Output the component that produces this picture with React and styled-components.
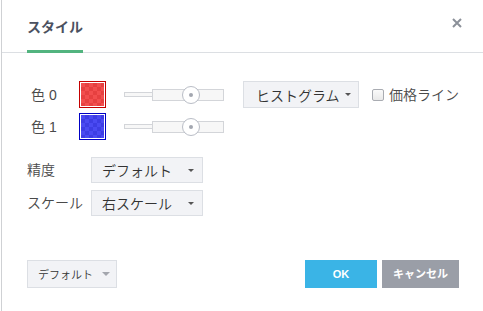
import styled, { createGlobalStyle } from 'styled-components';

const GlobalStyle = createGlobalStyle`
  body {
    margin: 0;
    background: #fff;
    font-family: "Liberation Sans", "Noto Sans CJK JP", sans-serif;
  }
`;

const Dialog = styled.div`
  box-sizing: border-box;
  width: 482px;
  height: 311px;
  margin-left: 1px;
  border-left: 1px solid #cfd1d4;
  display: flex;
  flex-direction: column;
`;

const Header = styled.div`
  height: 52px;
  border-bottom: 1px solid #dcdfe3;
  display: flex;
  align-items: stretch;
  justify-content: space-between;
  padding: 0 20px 0 25px;
`;

const TitleTab = styled.div`
  display: flex;
  align-items: center;
  padding-top: 1px;
  margin-bottom: -1px;
  border-bottom: 3px solid #52b47f;
  font-family: "Noto Sans CJK JP", sans-serif;
  font-size: 14px;
  font-weight: 700;
  color: #4b5160;
  line-height: 1;
  box-sizing: border-box;
`;

const Close = styled.button`
  border: 0;
  background: none;
  padding: 0;
  margin-top: 17px;
  width: 12px;
  height: 12px;
  cursor: pointer;
`;

const Body = styled.div`
  padding: 28px 0 0 25px;
  display: flex;
  flex-direction: column;
`;

const ColorRow = styled.div`
  display: flex;
  align-items: center;
  height: 27px;
  padding-left: 4px;
  margin-bottom: ${({ $gap }) => $gap}px;
`;

const Label = styled.span`
  width: ${({ $w }) => $w}px;
  font-size: 14px;
  font-weight: 350;
  color: #4a4a4a;
  line-height: 1;
  flex-shrink: 0;
`;

const Swatch = styled.div`
  box-sizing: border-box;
  width: 27px;
  height: 27px;
  border: 1px solid ${({ $edge }) => $edge};
  padding: 1px;
  background: #fff;
  & > div {
    width: 100%;
    height: 100%;
    background-color: ${({ $a }) => $a};
    background-image: conic-gradient(${({ $b }) => $b} 25%, transparent 0 50%, ${({ $b }) => $b} 0 75%, transparent 0);
    background-size: 8px 8px;
  }
`;

const Slider = styled.div`
  position: relative;
  display: flex;
  align-items: center;
  width: 100px;
  height: 17px;
  margin-left: 18px;
`;

const ThinTrack = styled.div`
  box-sizing: border-box;
  width: 28px;
  height: 5px;
  border: 1px solid #d3d5d9;
  border-right: 0;
  background: #f7f7f7;
`;

const WideTrack = styled.div`
  box-sizing: border-box;
  flex: 1;
  height: 12px;
  border: 1px solid #d3d5d9;
  background: #f7f7f7;
`;

const Knob = styled.div`
  position: absolute;
  left: 58px;
  top: 0;
  box-sizing: border-box;
  width: 18px;
  height: 18px;
  border-radius: 50%;
  border: 1px solid #b9bdc6;
  background: #fff;
  &::after {
    content: '';
    position: absolute;
    left: 6px;
    top: 6px;
    width: 4px;
    height: 4px;
    border-radius: 50%;
    background: #a3a7b0;
  }
`;

const Caret = styled.span`
  width: 0;
  height: 0;
  border-left: ${({ $s }) => $s}px solid transparent;
  border-right: ${({ $s }) => $s}px solid transparent;
  border-top: ${({ $s }) => $s}px solid ${({ $c }) => $c};
  margin-left: ${({ $ml }) => $ml}px;
`;

const Select = styled.button`
  box-sizing: border-box;
  display: flex;
  align-items: center;
  width: ${({ $w }) => $w}px;
  height: ${({ $h }) => $h}px;
  margin-left: ${({ $ml }) => $ml || 0}px;
  padding: 0 0 0 ${({ $pl }) => $pl}px;
  border: 1px solid #dcdfe4;
  background: #f2f3f6;
  font-family: "Noto Sans CJK JP", sans-serif;
  font-size: ${({ $fs }) => $fs}px;
  font-weight: 350;
  color: #333;
  line-height: 1;
  cursor: pointer;
`;

const CheckWrap = styled.label`
  display: flex;
  align-items: center;
  margin-left: 13px;
  font-size: 14px;
  font-weight: 350;
  color: #4a4a4a;
  line-height: 1;
`;

const Box = styled.span`
  box-sizing: border-box;
  width: 12px;
  height: 12px;
  border: 1px solid #a9acb2;
  border-radius: 2px;
  background: linear-gradient(#fafafa, #e9e9e9);
  margin-right: 5px;
`;

const SelectRow = styled.div`
  display: flex;
  align-items: center;
  height: 26px;
  margin-top: ${({ $mt }) => $mt}px;
`;

const Footer = styled.div`
  display: flex;
  align-items: center;
  padding: 0 24px 0 25px;
  margin-top: 44px;
`;

const Spacer = styled.div`
  flex: 1;
`;

const Action = styled.button`
  box-sizing: border-box;
  width: ${({ $w }) => $w}px;
  height: 28px;
  margin-left: ${({ $ml }) => $ml || 0}px;
  border: 0;
  background: ${({ $bg }) => $bg};
  color: #fff;
  font-family: "Liberation Sans", "Noto Sans CJK JP", sans-serif;
  font-size: 11px;
  font-weight: 700;
  line-height: 1;
  cursor: pointer;
`;

const colors = [
  { label: '色 0', edge: '#c40000', a: '#f24e4e', b: '#e64040' },
  { label: '色 1', edge: '#0000c4', a: '#4a4af2', b: '#3d3de4' },
];

export default function App() {
  return (
    <>
      <GlobalStyle />
      <Dialog>
        <Header>
          <TitleTab>スタイル</TitleTab>
          <Close aria-label="close">
            <svg width="12" height="12" viewBox="0 0 12 12">
              <path d="M2 2 L10 10 M10 2 L2 10" stroke="#8b9099" strokeWidth="2" />
            </svg>
          </Close>
        </Header>
        <Body>
          {colors.map((c, i) => (
            <ColorRow key={c.label} $gap={i === 0 ? 5 : 0}>
              <Label $w={48}>{c.label}</Label>
              <Swatch $edge={c.edge} $a={c.a} $b={c.b}>
                <div />
              </Swatch>
              <Slider>
                <ThinTrack />
                <WideTrack />
                <Knob />
              </Slider>
              {i === 0 && (
                <>
                  <Select $w={116} $h={27} $ml={19} $pl={12} $fs={14}>
                    ヒストグラム
                    <Caret $s={3} $c="#555" $ml={5} />
                  </Select>
                  <CheckWrap>
                    <Box />
                    価格ライン
                  </CheckWrap>
                </>
              )}
            </ColorRow>
          ))}
          <SelectRow $mt={17}>
            <Label $w={64}>精度</Label>
            <Select $w={112} $h={26} $pl={10} $fs={14}>
              デフォルト
              <Caret $s={3} $c="#555" $ml={16} />
            </Select>
          </SelectRow>
          <SelectRow $mt={7}>
            <Label $w={64}>スケール</Label>
            <Select $w={112} $h={26} $pl={10} $fs={14}>
              右スケール
              <Caret $s={3} $c="#555" $ml={16} />
            </Select>
          </SelectRow>
        </Body>
        <Footer>
          <Select $w={90} $h={28} $pl={10} $fs={11}>
            デフォルト
            <Caret $s={4} $c="#a3a6ad" $ml={9} />
          </Select>
          <Spacer />
          <Action $w={72} $bg="#3ab4e6">OK</Action>
          <Action $w={77} $ml={5} $bg="#9a9ea7">キャンセル</Action>
        </Footer>
      </Dialog>
    </>
  );
}
